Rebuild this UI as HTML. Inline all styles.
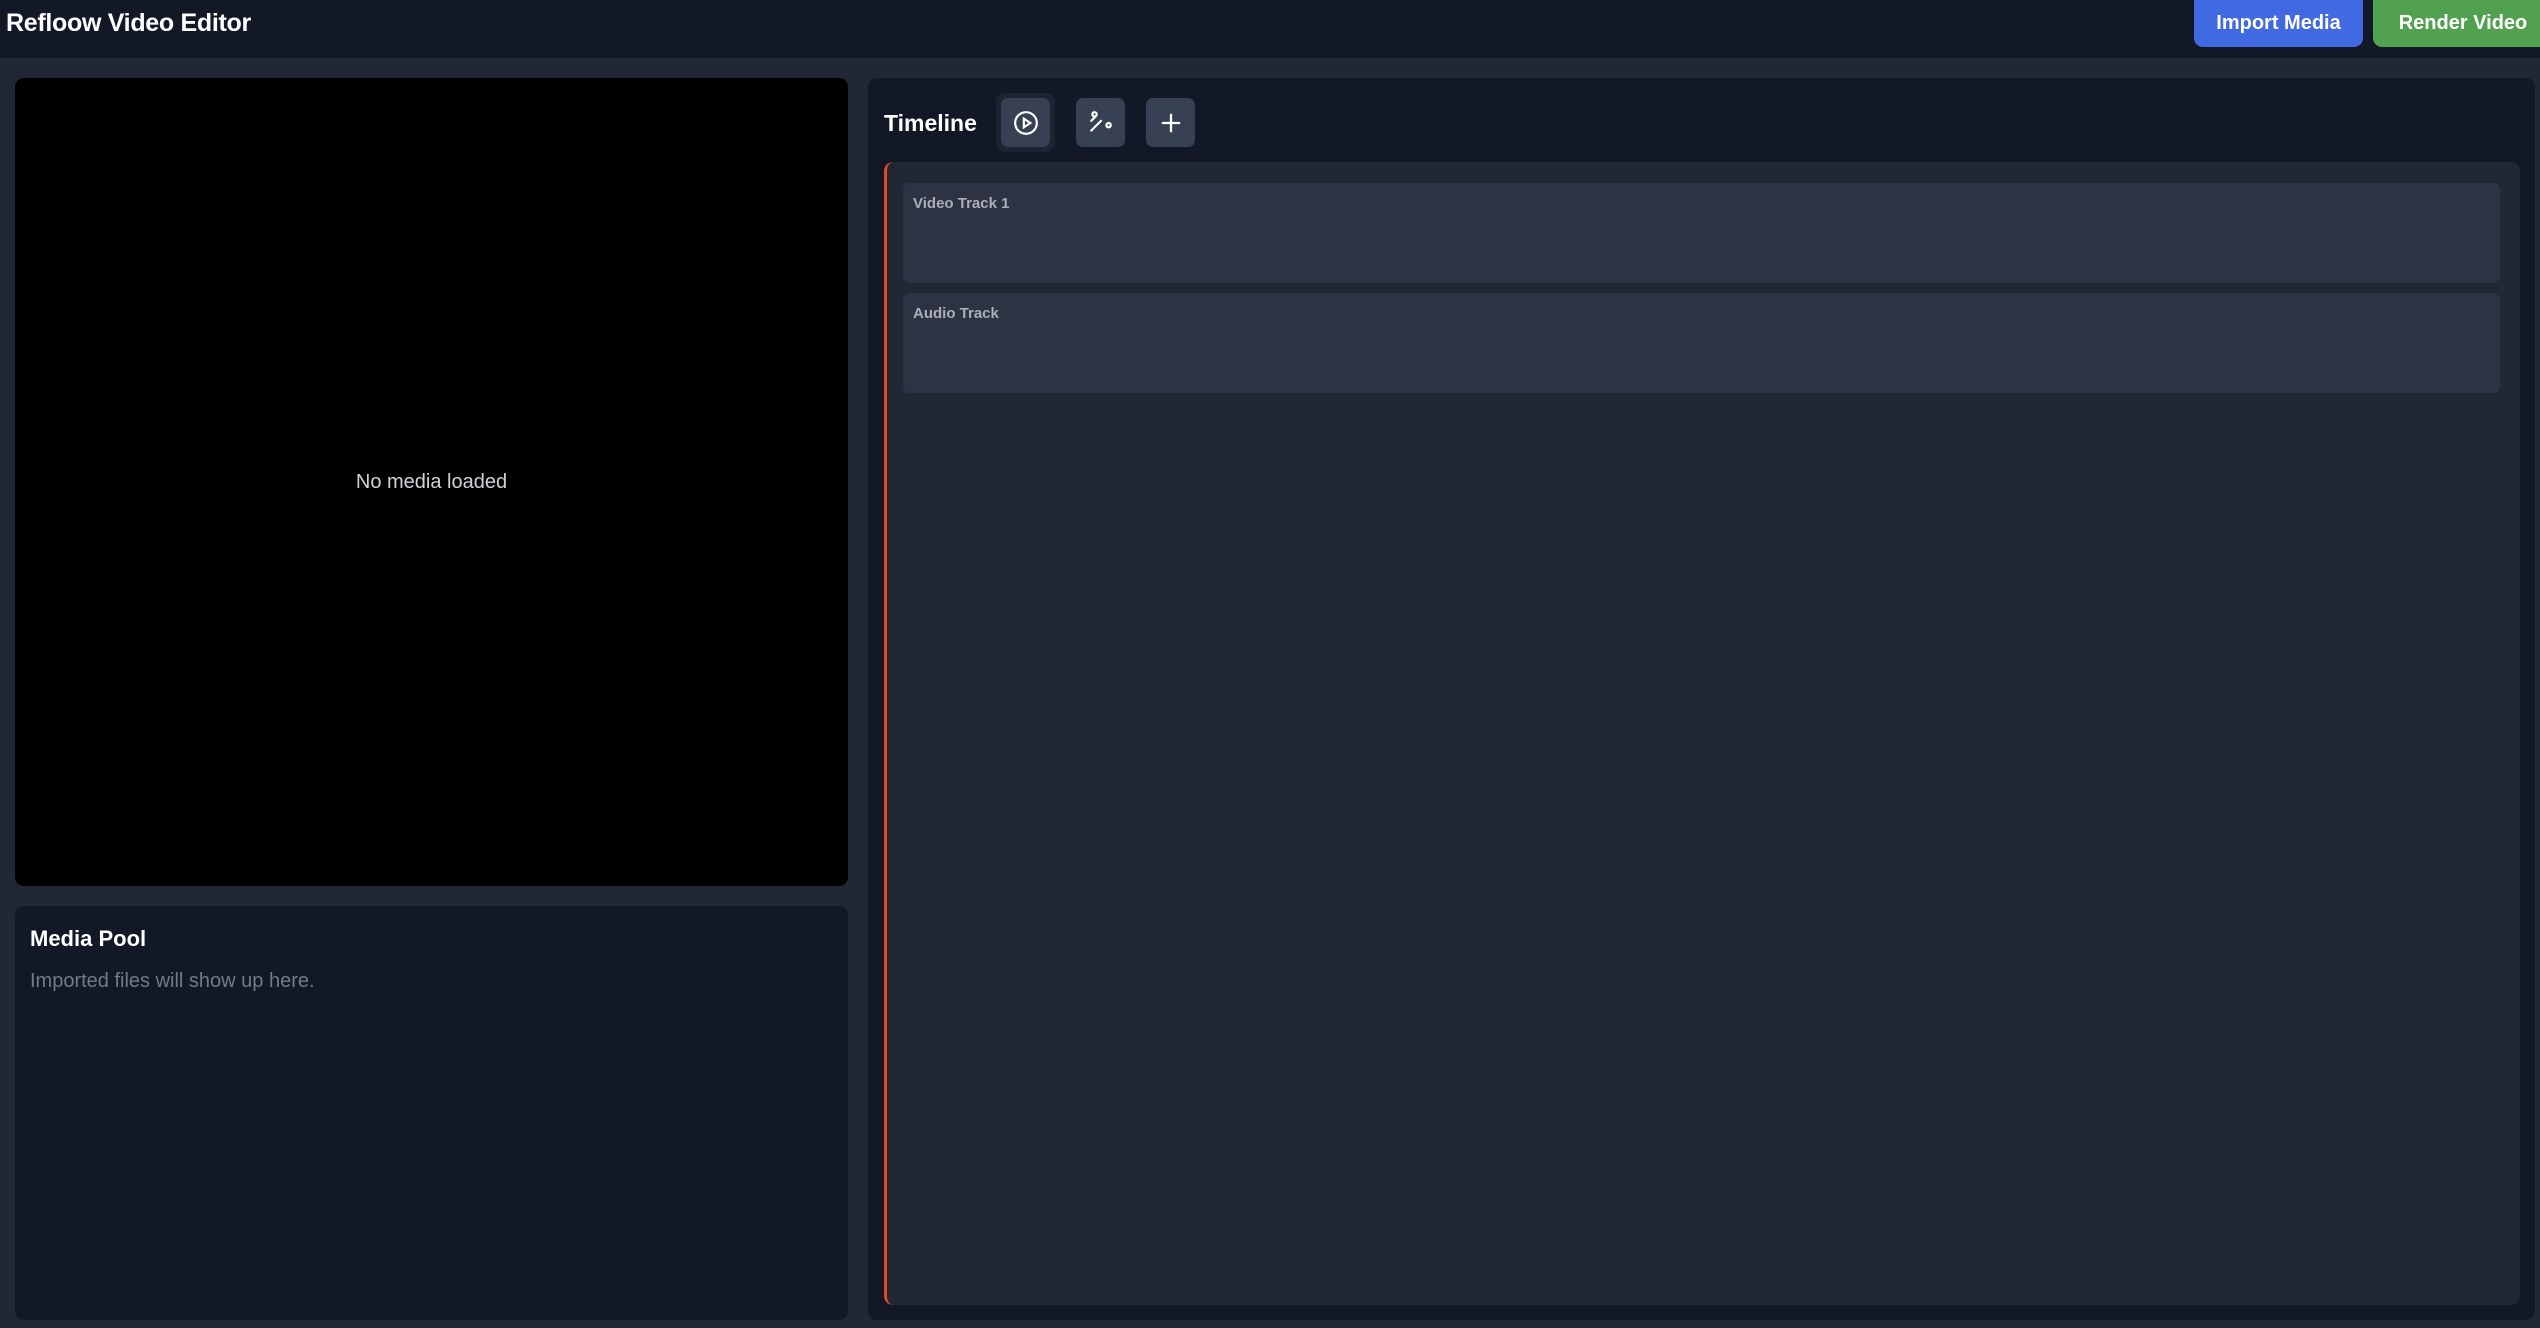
<!DOCTYPE html>
<html><head><meta charset="utf-8"><style>
*{box-sizing:border-box;margin:0;padding:0}
body{width:2540px;height:1328px;background:#222735;font-family:"Liberation Sans",sans-serif;position:relative;overflow:hidden}
.abs{position:absolute}
.hdr{left:0;top:0;width:2540px;height:58px;background:#131826}
.title{left:6px;top:9px;color:#fff;font-size:25px;font-weight:bold;letter-spacing:-0.3px}
.btn{top:0;height:47px;border-radius:0 0 9px 9px;color:#fff;font-weight:bold;font-size:20px;display:flex;align-items:center;justify-content:center}
.prev{left:15px;top:78px;width:833px;height:808px;background:#000;border-radius:9px;color:#cfd2d8;font-size:20px;display:flex;align-items:center;justify-content:center}
.pool{left:15px;top:906px;width:833px;height:414px;background:#131826;border-radius:9px}
.tl{left:868px;top:78px;width:1667px;height:1242px;background:#131826;border-radius:9px}
.ib{width:49px;height:49px;background:#384053;border-radius:7px;display:flex;align-items:center;justify-content:center}
.area{left:884px;top:162px;width:1636px;height:1143px;background:#222735;border-radius:9px;border-left:3px solid #e24a26}
.trk{left:903px;width:1597px;height:100px;background:#2e3344;border-radius:7px;color:#a9aeb8;font-size:15px;font-weight:bold;padding:12px 10px}
</style></head><body>
<div class="abs hdr"></div>
<div class="abs title">Refloow Video Editor</div>
<div class="abs btn" style="left:2194px;width:169px;background:#4169e1">Import Media</div>
<div class="abs btn" style="left:2373px;width:180px;background:#52a150">Render Video</div>
<div class="abs prev">No media loaded</div>
<div class="abs pool">
 <div class="abs" style="left:15px;top:20px;color:#fff;font-size:22px;font-weight:bold">Media Pool</div>
 <div class="abs" style="left:15px;top:64px;color:#737987;font-size:20px">Imported files will show up here.</div>
</div>
<div class="abs tl"></div>
<div class="abs" style="left:884px;top:110px;color:#fff;font-size:23px;font-weight:bold">Timeline</div>
<div class="abs" style="left:996px;top:93px;width:59px;height:59px;background:#1e2332;border-radius:9px"></div>
<div class="abs ib" style="left:1001px;top:98px"><svg width="26" height="26" viewBox="0 0 24 24" fill="none" stroke="#fff" stroke-width="2"><circle cx="12" cy="12" r="10"/><path d="M10 8l6 4-6 4z"/></svg></div>
<div class="abs ib" style="left:1076px;top:98px"><svg width="26" height="26" viewBox="0 0 24 24" fill="none" stroke="#fff" stroke-width="2" stroke-linecap="round"><circle cx="6" cy="4" r="2"/><path d="M7 6 L3 10 M12 10 L3 19"/><circle cx="19" cy="14" r="2"/></svg></div>
<div class="abs ib" style="left:1146px;top:98px"><svg width="22" height="22" viewBox="0 0 24 24" stroke="#fff" stroke-width="2.5" stroke-linecap="round"><path d="M12 3v18M3 12h18"/></svg></div>
<div class="abs area"></div>
<div class="abs trk" style="top:183px">Video Track 1</div>
<div class="abs trk" style="top:293px">Audio Track</div>
</body></html>
